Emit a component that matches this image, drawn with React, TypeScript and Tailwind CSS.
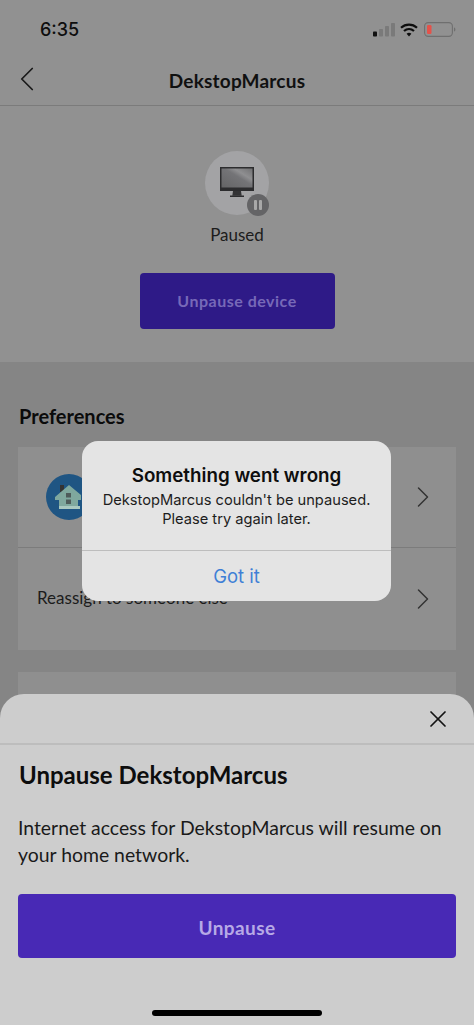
import { ChevronLeft, ChevronRight, X } from "lucide-react";

const brand = { fontFamily: "Lato, sans-serif" };

function StatusIcons() {
  return (
    <div className="flex items-center gap-[5px]">
      <svg width="22" height="14" viewBox="0 0 22 14">
        <rect x="0" y="8.5" width="4" height="5" rx="0.8" fill="#111" />
        <rect x="6" y="6" width="4" height="7.5" rx="0.8" fill="#7a7a7a" />
        <rect x="12" y="3" width="4" height="10.5" rx="0.8" fill="#7a7a7a" />
        <rect x="18" y="0" width="4" height="13.5" rx="0.8" fill="#7a7a7a" />
      </svg>
      <svg width="18" height="14" viewBox="0 0 18 14" fill="none" stroke="#0d0d0d" strokeWidth="2.2">
        <path d="M1 4.8C5.6 .6 12.4 .6 17 4.8" />
        <path d="M4 8C7 5.3 11 5.3 14 8" />
        <path d="M9 13.4 6.6 10.7C8 9.5 10 9.5 11.4 10.7Z" fill="#0d0d0d" stroke="none" />
      </svg>
      <svg width="32" height="15" viewBox="0 0 32 15" className="ml-[1px]">
        <rect x="0.6" y="0.6" width="27.8" height="13.8" rx="3.6" fill="none" stroke="#6f6f6f" strokeWidth="1.1" />
        <rect x="3" y="3" width="4.5" height="9" rx="1.2" fill="#e4524a" />
        <path d="M30 5.5c1 .3 1.4 1.1 1.4 2s-.4 1.7-1.4 2z" fill="#6f6f6f" />
      </svg>
    </div>
  );
}

function DeviceIcon() {
  return (
    <div className="relative flex h-16 w-16 items-center justify-center rounded-full bg-[#a3a3a5]">
      <svg width="36" height="44" viewBox="0 0 36 44" className="mb-[3px]">
        <defs>
          <linearGradient id="screen" x1="0" y1="1" x2="1" y2="0">
            <stop offset="0" stopColor="#646466" />
            <stop offset="0.55" stopColor="#747477" />
            <stop offset="0.7" stopColor="#8f8f91" />
            <stop offset="1" stopColor="#717173" />
          </linearGradient>
        </defs>
        <rect x="1" y="7" width="34" height="24" fill="#2c2c2e" />
        <rect x="2.5" y="8.5" width="31" height="19" fill="url(#screen)" />
        <path d="M14 31h8l.7 4.8H13.3z" fill="#333335" />
        <rect x="11" y="35.5" width="14" height="1.5" fill="#2c2c2e" />
      </svg>
      <div className="absolute right-[0px] bottom-[-1px] flex h-[22px] w-[22px] items-center justify-center gap-[2px] rounded-full bg-[#646466]">
        <span className="h-[10px] w-[3px] rounded-[1px] bg-[#a8a8a8]" />
        <span className="h-[10px] w-[3px] rounded-[1px] bg-[#a8a8a8]" />
      </div>
    </div>
  );
}

function HouseIcon() {
  return (
    <div className="flex h-[46px] w-[46px] items-center justify-center rounded-full bg-[#1f5583]">
      <svg width="30" height="30" viewBox="0 0 30 30">
        <rect x="6" y="3" width="4" height="7" fill="#333" />
        <path d="M1 15 15 3l12 10v5H24v9H5v-9H1z" fill="#7fa89e" />
        <rect x="5" y="24" width="21" height="3" fill="#a9c8c0" />
        <rect x="12" y="11" width="5" height="4.5" fill="#4e5b5a" />
        <rect x="12" y="17.5" width="5" height="4.5" fill="#4e5b5a" />
      </svg>
    </div>
  );
}

export default function App() {
  return (
    <div className="relative h-[1025px] w-[474px] overflow-hidden bg-[#858585] text-[#101010]" style={brand}>
      <div className="bg-[#919191] pb-[33px]">
        <div className="flex h-[58px] items-center justify-between pr-[18px] pl-[40px] pt-[1px]">
          <span className="text-[18px] font-medium text-[#0e0e0e]" style={{ fontFamily: "Inter, sans-serif" }}>
            6:35
          </span>
          <StatusIcons />
        </div>
        <div className="relative flex h-[48px] items-center justify-center border-b border-[#7b7b7b]">
          <ChevronLeft className="absolute top-[0px] left-[6px] h-[42px] w-[42px] text-[#1a1a1a]" strokeWidth={1} />
          <h1 className="mb-[1px] text-[19px] font-bold tracking-[0.2px]">DekstopMarcus</h1>
        </div>
        <div className="flex flex-col items-center pt-[45px]">
          <DeviceIcon />
          <p className="mt-[9px] text-[17px] leading-[22px] text-[#1c1c1c]">Paused</p>
          <button className="mt-[27px] h-[56px] w-[195px] rounded-[4px] bg-[#2e1a87] text-[16px] font-bold tracking-[0.5px] text-[#7769b8]">
            Unpause device
          </button>
        </div>
      </div>

      <div className="px-[18px] pt-[42px]">
        <h2 className="pl-[1px] text-[20px] leading-[24px] font-bold text-[#0b0b0b]">Preferences</h2>
        <div className="mt-[19px] bg-[#8f8f8f]">
          <div className="flex h-[101px] items-center justify-between border-b border-[#7c7c7c] pr-[15px] pl-[28px]">
            <HouseIcon />
            <ChevronRight className="h-[36px] w-[36px] text-[#333]" strokeWidth={1} />
          </div>
          <div className="flex h-[102px] items-start justify-between pt-[33px] pr-[15px] pl-[19px]">
            <span className="mt-[5px] text-[17px] leading-[24px] text-[#1c1c1c]">Reassign to someone else</span>
            <ChevronRight className="h-[36px] w-[36px] text-[#333]" strokeWidth={1} />
          </div>
        </div>
        <div className="mt-[22px] h-[40px] bg-[#8f8f8f]" />
      </div>

      <div
        className="absolute top-[441px] left-[82px] flex h-[160px] w-[309px] flex-col rounded-[16px] bg-[#e4e4e4]"
        style={{ fontFamily: "Inter, sans-serif" }}
      >
        <div className="flex h-[110px] flex-col items-center border-b border-[#bdbdbd] pt-[23px] text-center">
          <p className="text-[18.8px] leading-[24px] font-semibold text-[#0e0e0e]">Something went wrong</p>
          <p className="mt-[3px] text-[14.66px] leading-[18.5px] text-[#1d1d1d]">
            DekstopMarcus couldn't be unpaused.
            <br />
            Please try again later.
          </p>
        </div>
        <div className="flex flex-1 items-center justify-center pt-[2px] text-[18.5px] text-[#3f7fd6]">Got it</div>
      </div>

      <div className="absolute inset-x-0 top-[694px] h-[331px] rounded-t-[24px] bg-[#cdcdcd]">
        <div className="relative h-[51px] border-b-2 border-[#bdbdbd]">
          <X className="absolute top-[11px] right-[22px] h-[28px] w-[28px] text-[#141414]" strokeWidth={1.5} />
        </div>
        <div className="px-[18px]">
          <h2 className="mt-[15px] pl-[1px] text-[24px] leading-[30px] font-bold text-[#0d0d0d]">Unpause DekstopMarcus</h2>
          <p className="mt-[24px] text-[19.4px] leading-[27px] text-[#1a1a1a]">
            Internet access for DekstopMarcus will resume on your home network.
          </p>
          <button className="mt-[26px] h-[64px] w-full rounded-[4px] bg-[#4829b5] pt-[5px] text-[19px] font-bold tracking-[0.4px] text-[#b7a9e6]">
            Unpause
          </button>
        </div>
        <div className="absolute bottom-[9px] left-[152px] h-[6px] w-[170px] rounded-full bg-black" />
      </div>
    </div>
  );
}
